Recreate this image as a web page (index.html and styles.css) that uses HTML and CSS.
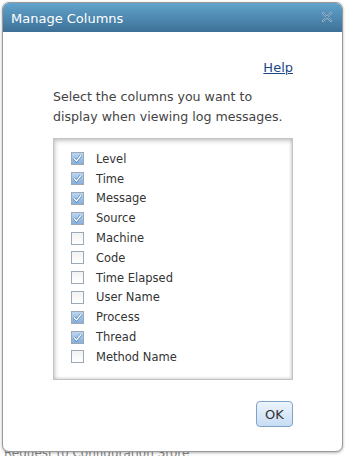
FILE: index.html
```html
<!DOCTYPE html>
<html lang="en">
<head>
    <meta charset="UTF-8">
    <meta name="viewport" content="width=device-width, initial-scale=1.0">
    <title>Manage Columns</title>
    <link rel="stylesheet" href="styles.css">
</head>
<body>
    <div class="page">
        <div class="page-line">Request to Configuration Store</div>
    </div>

    <div class="dialog">
        <div class="dialog-header">
            <span class="dialog-title">Manage Columns</span>
            <svg class="close" width="10" height="10" viewBox="0 0 10 10">
                <path d="M1 1 L9 9 M9 1 L1 9" stroke="#8fb0c8" stroke-width="2.4" stroke-linecap="round"/>
                <path d="M1 1 L9 9 M9 1 L1 9" stroke="#4f7fa4" stroke-width="0.9"/>
            </svg>
        </div>
        <div class="dialog-body">
            <div class="help-row"><a href="#" class="help">Help</a></div>
            <p class="intro">Select the columns you want to display when viewing log messages.</p>

            <div class="listbox">
                <label class="item"><span class="box on"></span>Level</label>
                <label class="item"><span class="box on"></span>Time</label>
                <label class="item"><span class="box on"></span>Message</label>
                <label class="item"><span class="box on"></span>Source</label>
                <label class="item"><span class="box"></span>Machine</label>
                <label class="item"><span class="box"></span>Code</label>
                <label class="item"><span class="box"></span>Time Elapsed</label>
                <label class="item"><span class="box"></span>User Name</label>
                <label class="item"><span class="box on"></span>Process</label>
                <label class="item"><span class="box on"></span>Thread</label>
                <label class="item"><span class="box"></span>Method Name</label>
            </div>

            <div class="actions">
                <button class="btn">OK</button>
            </div>
        </div>
    </div>
</body>
</html>
```
FILE: styles.css
```css
body {
    margin: 0;
    font-family: "DejaVu Sans", Verdana, sans-serif;
    background-color: #fff;
    width: 345px;
    height: 456px;
    overflow: hidden;
}

.page {
    padding: 446px 0 0 4px;
}

.page-line {
    font-size: 12px;
    line-height: 14px;
    color: #888;
}

.dialog {
    position: absolute;
    top: 2px;
    left: 2px;
    width: 339px;
    height: 448px;
    border: 1px solid #9a9a9a;
    border-radius: 7px;
    background-color: #fff;
    box-shadow: 0 1px 3px rgba(0, 0, 0, 0.3);
    overflow: hidden;
}

.dialog-header {
    height: 29px;
    display: flex;
    align-items: center;
    justify-content: space-between;
    padding: 0 10px 0 8px;
    background: linear-gradient(#62a3cc, #3d7097);
}

.dialog-title {
    color: #fff;
    font-size: 13px;
    padding-top: 2px;
}

.close {
    margin-top: -2px;
}

.dialog-body {
    padding: 25px 49px 0 50px;
}

.help-row {
    text-align: right;
}

.help {
    color: #1a4a86;
    font-size: 13px;
}

.intro {
    margin: 11px 0 11px;
    font-size: 12.6px;
    line-height: 20px;
    color: #444;
}

.listbox {
    height: 230px;
    border: 1px solid #c4c4c4;
    box-shadow: inset 1px 2px 4px rgba(0, 0, 0, 0.22), inset -1px -1px 3px rgba(0, 0, 0, 0.12);
    padding: 10px 0 0 17px;
    display: flex;
    flex-direction: column;
}

.item {
    display: flex;
    align-items: center;
    height: 19.8px;
    font-size: 11.5px;
    color: #333;
}

.box {
    width: 11px;
    height: 11px;
    border: 1px solid #9aa8b8;
    margin-right: 12px;
    background: linear-gradient(#f2f2f2, #fff);
}

.box.on {
    background: url("data:image/svg+xml,%3Csvg xmlns='http://www.w3.org/2000/svg' width='11' height='11'%3E%3Cpath d='M2 5.5 L4.5 8 L9 2.5' fill='none' stroke='%234e7fb5' stroke-width='2.6'/%3E%3Cpath d='M2 5.5 L4.5 8 L9 2.5' fill='none' stroke='%23fff' stroke-width='1.2'/%3E%3C/svg%3E") no-repeat, linear-gradient(#bcd5ef, #86b0dc);
}

.actions {
    display: flex;
    justify-content: flex-end;
    padding-top: 21px;
}

.btn {
    font-family: "DejaVu Sans", Verdana, sans-serif;
    font-size: 13px;
    color: #333;
    width: 37px;
    height: 26px;
    padding: 0;
    border: 1px solid #7fa3c8;
    border-radius: 4px;
    background: linear-gradient(#edf4fc, #c7ddf4);
}
```
